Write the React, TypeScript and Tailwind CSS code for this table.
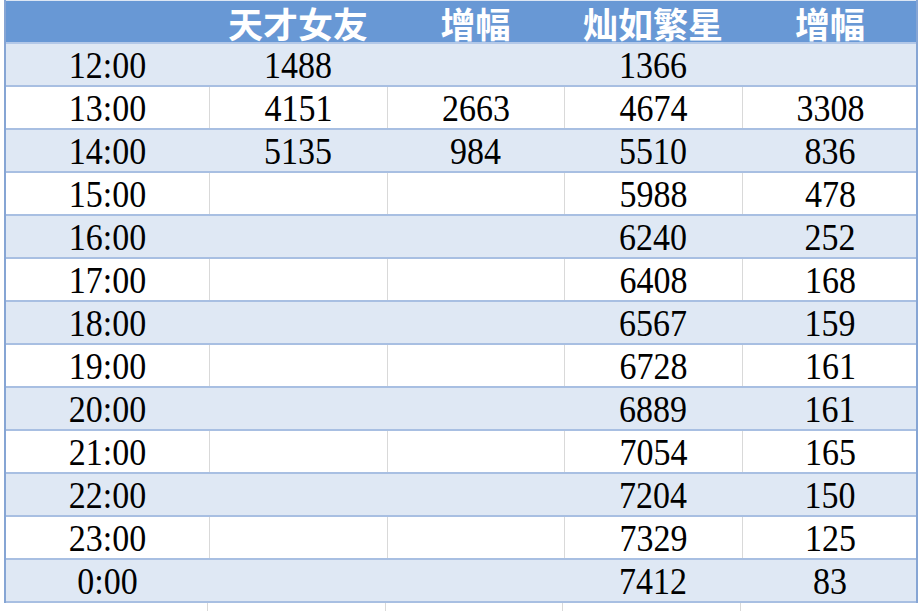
import React from "react";

const rows: string[][] = [
  ["12:00", "1488", "", "1366", ""],
  ["13:00", "4151", "2663", "4674", "3308"],
  ["14:00", "5135", "984", "5510", "836"],
  ["15:00", "", "", "5988", "478"],
  ["16:00", "", "", "6240", "252"],
  ["17:00", "", "", "6408", "168"],
  ["18:00", "", "", "6567", "159"],
  ["19:00", "", "", "6728", "161"],
  ["20:00", "", "", "6889", "161"],
  ["21:00", "", "", "7054", "165"],
  ["22:00", "", "", "7204", "150"],
  ["23:00", "", "", "7329", "125"],
  ["0:00", "", "", "7412", "83"],
];

const widths = ["w-[203px]", "w-[178px]", "w-[177px]", "w-[178px]", "w-[176px]"];
const headers = ["", "天才女友", "增幅", "灿如繁星", "增幅"];

export default function App() {
  return (
    <div className="w-[923px] h-[611px] bg-white overflow-hidden">
      <div className="ml-[4px] w-[914px] flex flex-col border-l-2 border-r-2 border-[#86a5d4]">
        <div className="flex h-[44px] bg-[#6898d5] border-t border-[#dce6f4] border-b-2 border-b-[#b3c8e8]">
          {headers.map((h, i) => (
            <div
              key={i}
              className={`${widths[i]} shrink-0 flex items-center justify-center pt-[2px] text-white font-bold text-[35px] leading-[39px] font-['Noto_Sans_CJK_SC','Noto_Sans',sans-serif]`}
            >
              {h}
            </div>
          ))}
        </div>
        {rows.map((r, ri) => {
          const blue = ri % 2 === 0;
          return (
            <div
              key={ri}
              className={`flex h-[43px] border-b-2 border-[#a8bfe2] ${blue ? "bg-[#dfe8f4]" : "bg-white"}`}
            >
              {r.map((c, ci) => (
                <div
                  key={ci}
                  className={`${widths[ci]} shrink-0 flex items-center justify-center pt-[3px] text-black text-[34px] leading-[38px] font-['Liberation_Serif','Times_New_Roman',serif] ${
                    !blue && ci > 0 ? "border-l border-[#d9d9d9]" : ""
                  }`}
                >
                  <span className="inline-block scale-y-[1.13]">{c}</span>
                </div>
              ))}
            </div>
          );
        })}
      </div>
      <div className="ml-[4px] w-[914px] flex h-[10px] bg-white">
        {widths.map((w, i) => (
          <div key={i} className={`${w} shrink-0 ${i > 0 ? "border-l border-[#d9d9d9]" : ""}`} />
        ))}
      </div>
    </div>
  );
}
